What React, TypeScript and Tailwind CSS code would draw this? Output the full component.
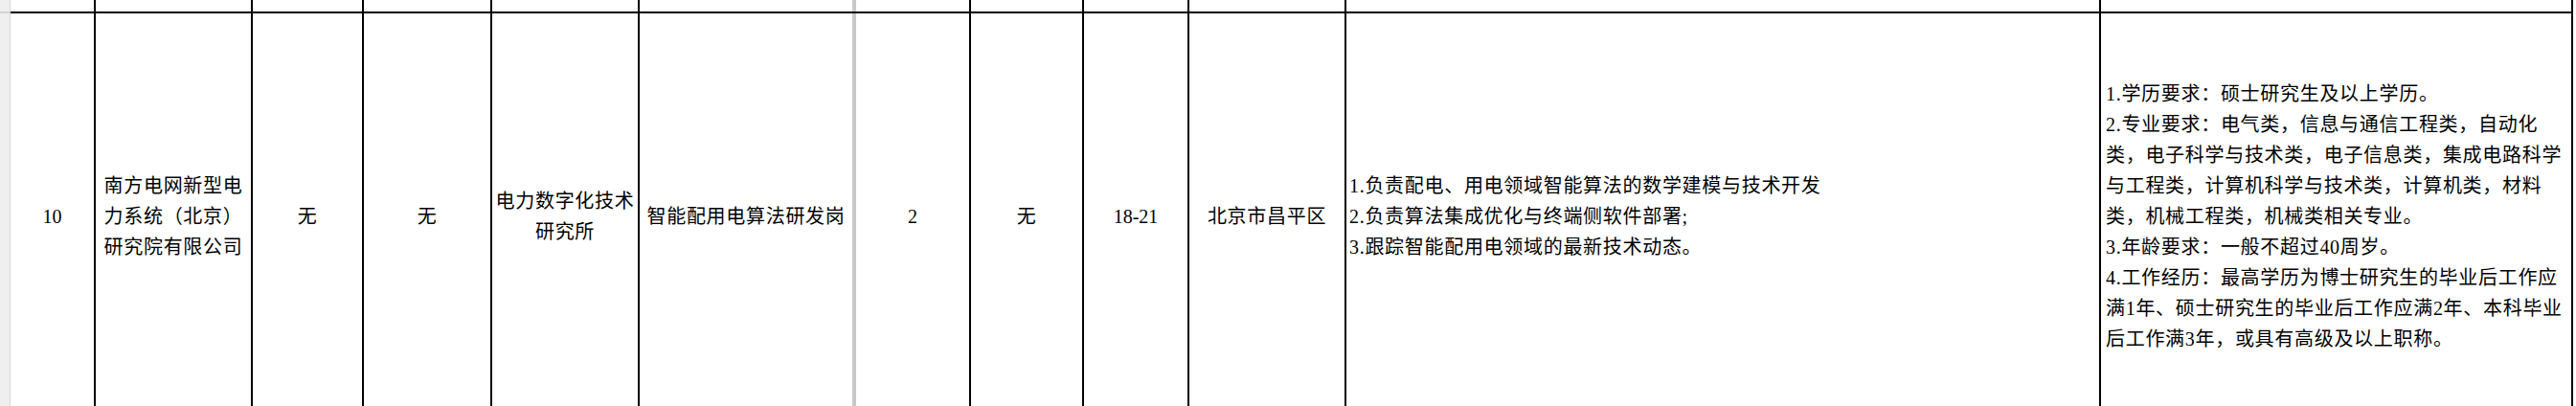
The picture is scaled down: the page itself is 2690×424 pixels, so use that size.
const cols = [
  { w: 'w-[89px]', kind: 'black' },
  { w: 'w-[164px]', kind: 'black' },
  { w: 'w-[116px]', kind: 'black' },
  { w: 'w-[134px]', kind: 'black' },
  { w: 'w-[154px]', kind: 'black' },
  { w: 'w-[226px]', kind: 'gray' },
  { w: 'w-[120px]', kind: 'black' },
  { w: 'w-[118px]', kind: 'black' },
  { w: 'w-[110px]', kind: 'black' },
  { w: 'w-[164px]', kind: 'black' },
  { w: 'w-[788px]', kind: 'black' },
  { w: 'w-[493px]', kind: 'black' },
];

const duties = [
  '1.负责配电、用电领域智能算法的数学建模与技术开发',
  '2.负责算法集成优化与终端侧软件部署;',
  '3.跟踪智能配用电领域的最新技术动态。',
];

const requirements = [
  '1.学历要求：硕士研究生及以上学历。',
  '2.专业要求：电气类，信息与通信工程类，自动化',
  '类，电子科学与技术类，电子信息类，集成电路科学',
  '与工程类，计算机科学与技术类，计算机类，材料',
  '类，机械工程类，机械类相关专业。',
  '3.年龄要求：一般不超过40周岁。',
  '4.工作经历：最高学历为博士研究生的毕业后工作应',
  '满1年、硕士研究生的毕业后工作应满2年、本科毕业',
  '后工作满3年，或具有高级及以上职称。',
];

const Lines = ({ lines, center }: { lines: string[]; center?: boolean }) => (
  <div className={center ? 'text-center' : 'text-left'}>
    {lines.map((l, i) => (
      <div key={i} className="whitespace-nowrap">
        {l}
      </div>
    ))}
  </div>
);

export default function App() {
  const cells = [
    <span className="tracking-normal">10</span>,
    <Lines center lines={['南方电网新型电', '力系统（北京）', '研究院有限公司']} />,
    <span>无</span>,
    <span>无</span>,
    <Lines center lines={['电力数字化技术', '研究所']} />,
    <span className="whitespace-nowrap">智能配用电算法研发岗</span>,
    <span className="tracking-normal">2</span>,
    <span>无</span>,
    <span className="tracking-normal">18-21</span>,
    <span className="whitespace-nowrap">北京市昌平区</span>,
    <Lines lines={duties} />,
    <Lines lines={requirements} />,
  ];

  const border = (kind: string) =>
    kind === 'gray' ? 'border-r-4 border-[#c8c8c8]' : 'border-r-2 border-black';

  return (
    <div className="flex h-[424px] w-[2690px] items-start overflow-hidden bg-white text-black font-['Liberation_Serif','Noto_Sans_CJK_SC',serif] text-[20px] leading-[32px] tracking-[0.7px]">
      {/* spreadsheet edge */}
      <div className="flex h-[424px] w-[11px] shrink-0 flex-col">
        <div className="h-[12px] shrink-0 border-r border-[#d9d9d9] bg-[#efefef]" />
        <div className="h-[2px] shrink-0 bg-[#d2d2d2]" />
        <div className="flex-1 border-r border-[#d9d9d9] bg-[#efefef]" />
      </div>

      <div className="flex w-[2676px] shrink-0 flex-col">
        <div className="flex h-[12px] shrink-0">
          {cols.map((c, i) => (
            <div key={i} className={`${c.w} ${border(c.kind)} h-full shrink-0`} />
          ))}
        </div>
        <div className="h-[2px] shrink-0 bg-black" />
        <div className="flex h-[424px] shrink-0">
          {cols.map((c, i) => (
            <div
              key={i}
              className={`${c.w} ${border(c.kind)} flex h-full shrink-0 items-center ${
                i === 10 ? 'justify-start pl-[3px]' : i === 11 ? 'justify-start pl-[5px]' : 'justify-center'
              }`}
            >
              {cells[i]}
            </div>
          ))}
        </div>
      </div>
    </div>
  );
}
